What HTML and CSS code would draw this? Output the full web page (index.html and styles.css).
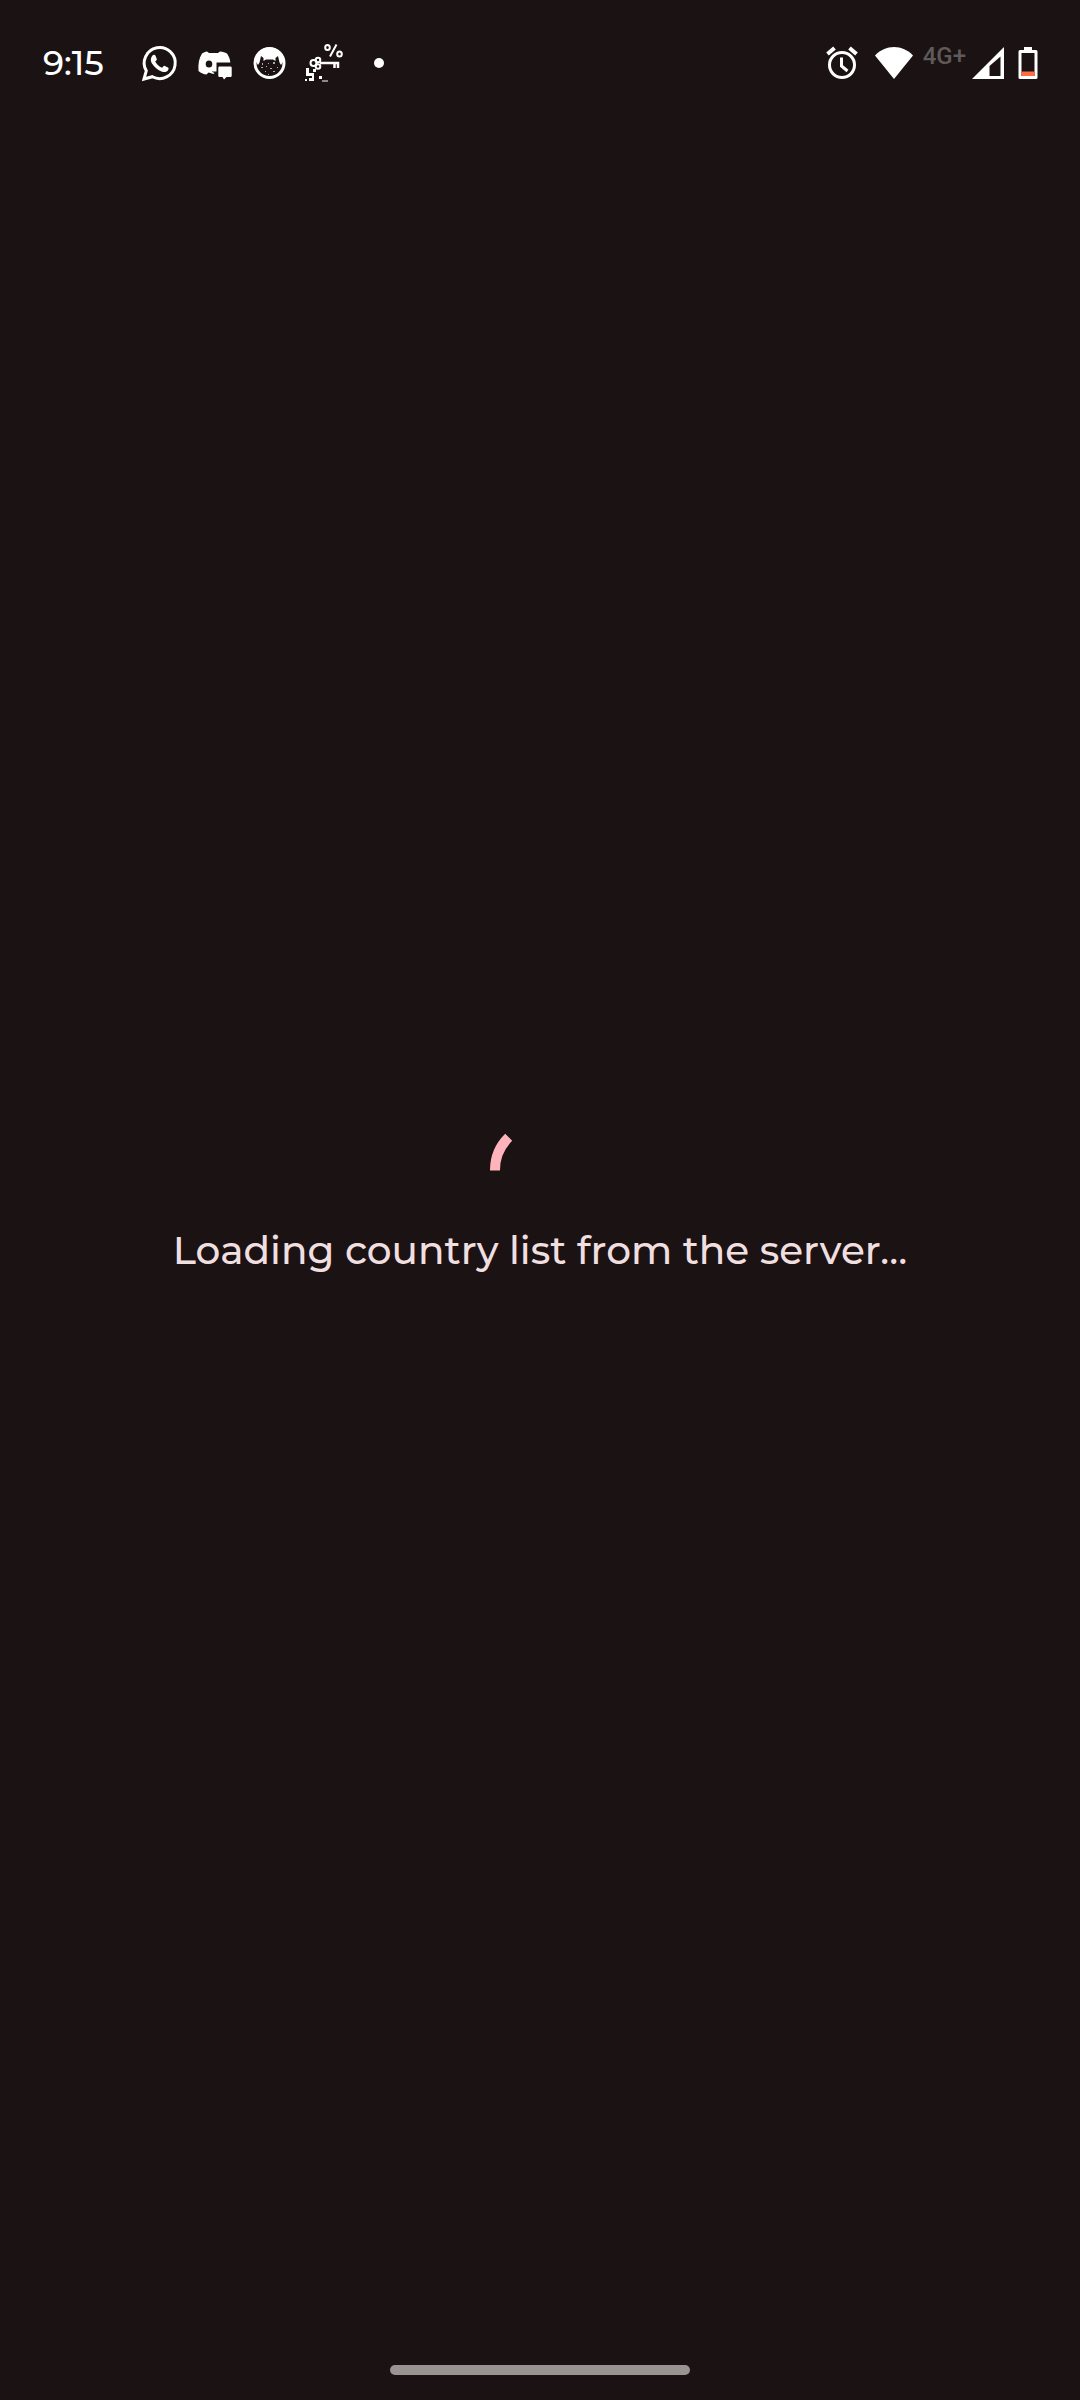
FILE: index.html
```html
<!DOCTYPE html>
<html lang="en">
<head>
<meta charset="utf-8">
<meta name="viewport" content="width=device-width, initial-scale=1">
<title>Loading</title>
<link rel="stylesheet" href="styles.css">
</head>
<body class="screen">
<header class="status-bar">
  <div class="status-left">
    <time class="clock">9:15</time>
    <div class="notifications">
      <svg class="notification" viewBox="0 0 40 40" aria-label="WhatsApp">
        <path d="M4 36 6.300 27.800A15.500 15.500 0 1 1 12.400 33.700Z" fill="none" stroke="#fff" stroke-width="3" stroke-linejoin="miter"/>
        <path d="M12.500 12.500c1-1 2.500-.8 3 .2l1.300 3.200c.2.700-.1 1.200-1.600 2.700 1.500 2.700 3.900 5.200 6.900 6.200 1.200-1.400 1.800-2.300 2.700-1.900l3.200 1.600c1 .5.600 2.200-.3 3.200-1.500 1.600-3.800 1.700-6.200.8-4.300-1.600-7.500-4.700-9.700-8.200-1.600-2.800-1.200-5.700.7-7.800z" fill="#fff"/>
      </svg>
      <svg class="notification" viewBox="0 0 40 40" aria-label="Discord">
        <path fill="#fff" fill-rule="evenodd" d="M12 8.500 14 10H23L25 8.500C28 8.600 30 9.500 32 10.500c2 3 3 5.500 3.300 9H21.500v9h-5l3 1.500-1 1-5-1.500-2 2C9 31.500 6 30 3.500 28 3 21 4 15 7 10.500c2-1 3-1.800 5-2zM14 17.500a3.300 3.500 0 0 0 0 7 3.300 3.500 0 0 0 0-7z"/>
        <path fill="#fff" d="M24.500 23.500h11q1.200 0 1.200 1.200v8q0 1.300-1.200 1.300h-4L29 36.500 27.500 34h-3q-1.200 0-1.200-1.300v-8q0-1.200 1.200-1.200z"/>
      </svg>
      <svg class="notification" viewBox="0 0 40 40" aria-label="Cat">
        <circle cx="19.500" cy="20" r="14.500" fill="none" stroke="#fff" stroke-width="3"/>
        <path fill="#fff" d="M5.500 18C6 9 12 4.500 19.500 4.500S33 9 33.500 18L31 22 29.500 19.500 28 13 25.500 15 25.500 18 23 16.500H16l-2.500 1.500V15L11 13 9.500 19.500 8 22z"/>
        <path fill="#aaa" d="M12 20h1v2h-1zM18 20h1v1h-1zM23 19h2v2h-2zM11 24h2v1h-2zM16 23h1v1h-1zM20 25h2v1h-2zM27 24h1v1h-1zM15 28h1v1h-1zM23 28h2v1h-2zM18 31h1v1h-1z"/>
      </svg>
      <svg class="notification" viewBox="0 0 40 40" aria-label="Key">
        <g fill="none" stroke="#fff" stroke-width="2">
          <ellipse cx="22.500" cy="4.500" rx="2.300" ry="2.500"/>
          <ellipse cx="34.500" cy="11" rx="2.300" ry="2.500"/>
          <path d="M31.500 1.500 25 13.500"/>
          <circle cx="8.500" cy="20" r="3"/>
          <circle cx="13" cy="17" r="2.300"/>
          <circle cx="13" cy="23.500" r="2.300"/>
          <path d="M15 20H33V25M29.500 20v5" stroke-width="2.500"/>
        </g>
        <path fill="#fff" d="M1 25h3v5h5v8H4v-3h3v-2H1zM8 26h3v3H8zM14 33h3v3h-3zM17 37.500h6v1h-6zM0 36h2v2H0z"/>
      </svg>
      <svg class="notification" viewBox="0 0 40 40" aria-label="More notifications">
        <circle cx="19" cy="20" r="5" fill="#fff"/>
      </svg>
    </div>
  </div>
  <div class="status-right">
    <svg class="alarm" viewBox="0 0 32 34" aria-label="Alarm">
      <g fill="none" stroke="#fff" stroke-width="3">
        <circle cx="16" cy="19" r="12.500"/>
        <path d="M1.500 8 8.500 2M30.500 8 23.500 2" stroke-width="4"/>
        <path d="M15.500 11.500V20L21.500 25"/>
      </g>
    </svg>
    <svg class="wifi" viewBox="0 0 38 34" aria-label="Wi-Fi">
      <path d="M0 9.500C5 4 12 1 19 1s14 3 19 8.500L19 33z" fill="#fff"/>
    </svg>
    <span class="network">4G+</span>
    <svg class="signal" viewBox="0 0 32 34" aria-label="Signal">
      <path d="M32 1V33H0zM28.500 10.500 17.500 20V30H28.500z" fill="#fff" fill-rule="evenodd"/>
    </svg>
    <svg class="battery" viewBox="0 0 20 34" aria-label="Low battery">
      <path d="M6 1h8v3h4q1.500 0 1.500 1.500v26q0 1.500-1.500 1.500H2Q.5 33 .5 31.500v-26Q.5 4 2 4h4zM3.500 7v23h13V7z" fill="#fff" fill-rule="evenodd"/>
      <path d="M3.500 25.500h13V30h-13z" fill="#ff6e40"/>
    </svg>
  </div>
</header>
<main class="loading" role="status">
  <svg class="spinner" viewBox="0 0 100 100" aria-hidden="true">
    <path d="M5 48.500A46 46 0 0 1 18.700 15.300" fill="none" stroke="#ffb3bb" stroke-width="10"/>
  </svg>
  <p class="message">Loading country list from the server…</p>
</main>
<footer class="nav-bar"><div class="home-handle"></div></footer>
</body>
</html>
```
FILE: styles.css
```css
* {
  box-sizing: border-box;
}

.screen {
  margin: 0;
  min-height: 100vh;
  display: grid;
  grid-template-rows: 126px 1fr 126px;
  background: #1b1213;
  color: #f1dfe0;
  font-family: Montserrat, Inter, sans-serif;
}

.status-bar {
  display: flex;
  justify-content: space-between;
  align-items: center;
  padding: 0 42px 0 43px;
  color: #fff;
}

.status-left,
.status-right,
.notifications {
  display: flex;
  align-items: center;
}

.clock {
  width: 97px;
  font-size: 34px;
  font-weight: 500;
  line-height: 40px;
}

.notifications {
  gap: 15px;
}

.notification {
  width: 40px;
  height: 40px;
}

.alarm {
  width: 32px;
  height: 34px;
  margin-right: 17px;
}

.wifi {
  width: 38px;
  height: 34px;
  margin-right: 10px;
}

.network {
  height: 34px;
  margin-right: 6px;
  color: #5f5959;
  font-family: Roboto, sans-serif;
  font-size: 24px;
  font-weight: 500;
  line-height: 20px;
}

.signal {
  width: 32px;
  height: 34px;
  margin-right: 14px;
}

.battery {
  width: 20px;
  height: 34px;
}

.loading {
  display: flex;
  flex-direction: column;
  align-items: center;
  justify-content: center;
}

.spinner {
  width: 100px;
  height: 100px;
}

.message {
  margin: 0;
  font-size: 39px;
  font-weight: 500;
  line-height: 56px;
  text-align: center;
}

.nav-bar {
  display: flex;
  align-items: flex-end;
  justify-content: center;
  padding-bottom: 25px;
}

.home-handle {
  width: 300px;
  height: 10px;
  border-radius: 5px;
  background: #999392;
}
```
